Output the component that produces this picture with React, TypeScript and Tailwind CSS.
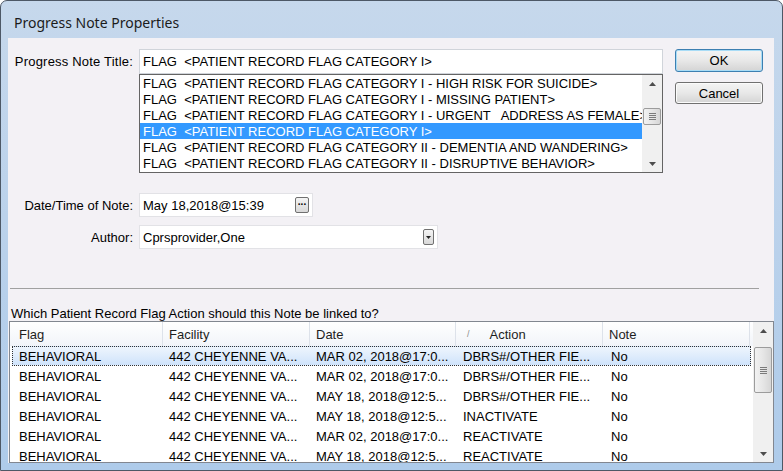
import React from "react";

const TITLE_LIST = [
  "FLAG  <PATIENT RECORD FLAG CATEGORY I - HIGH RISK FOR SUICIDE>",
  "FLAG  <PATIENT RECORD FLAG CATEGORY I - MISSING PATIENT>",
  "FLAG  <PATIENT RECORD FLAG CATEGORY I - URGENT   ADDRESS AS FEMALE>",
  "FLAG  <PATIENT RECORD FLAG CATEGORY I>",
  "FLAG  <PATIENT RECORD FLAG CATEGORY II - DEMENTIA AND WANDERING>",
  "FLAG  <PATIENT RECORD FLAG CATEGORY II - DISRUPTIVE BEHAVIOR>",
];

// header widths (from listview's inner left edge) and the matching row cell widths
const COLUMNS = [
  { title: "Flag", width: "w-[153px]", cell: "w-[150px] pl-[6px]" },
  { title: "Facility", width: "w-[147px]", cell: "w-[147px] pl-[6px]" },
  { title: "Date", width: "w-[146px]", cell: "w-[146px] pl-[6px]" },
  { title: "Action", width: "w-[147px]", cell: "w-[147px] pl-[7px]" },
  { title: "Note", width: "w-[147px]", cell: "w-[147px] pl-[8px]" },
];

const ACTIONS = [
  ["BEHAVIORAL", "442 CHEYENNE VA...", "MAR 02, 2018@17:0...", "DBRS#/OTHER FIE...", "No"],
  ["BEHAVIORAL", "442 CHEYENNE VA...", "MAR 02, 2018@17:0...", "DBRS#/OTHER FIE...", "No"],
  ["BEHAVIORAL", "442 CHEYENNE VA...", "MAY 18, 2018@12:5...", "DBRS#/OTHER FIE...", "No"],
  ["BEHAVIORAL", "442 CHEYENNE VA...", "MAY 18, 2018@12:5...", "INACTIVATE", "No"],
  ["BEHAVIORAL", "442 CHEYENNE VA...", "MAR 02, 2018@17:0...", "REACTIVATE", "No"],
  ["BEHAVIORAL", "442 CHEYENNE VA...", "MAY 18, 2018@12:5...", "REACTIVATE", "No"],
];

const Arrow = ({ up }: { up?: boolean }) => (
  <svg width="7" height="4" viewBox="0 0 7 4">
    <path d={up ? "M0 4 L3.5 0 L7 4 Z" : "M0 0 L3.5 4 L7 0 Z"} fill="#4d4d4d" />
  </svg>
);

const Grip = () => (
  <div className="flex flex-col gap-[1px]">
    <div className="h-[1px] w-[7px] bg-[#7a7a7a]" />
    <div className="h-[1px] w-[7px] bg-[#7a7a7a]" />
    <div className="h-[1px] w-[7px] bg-[#7a7a7a]" />
    <div className="h-[1px] w-[7px] bg-[#7a7a7a]" />
  </div>
);

type ScrollProps = {
  before: string;
  thumb: string;
  height: string;
};

const ScrollBar = ({ before, thumb, height }: ScrollProps) => (
  <div className={`flex w-[20px] flex-col bg-[#f0f0f0] ${height}`}>
    <div className="flex h-[17px] shrink-0 items-center justify-center">
      <Arrow up />
    </div>
    <div className={`shrink-0 ${before}`} />
    <div
      className={`mx-[1px] flex shrink-0 items-center justify-center rounded-[2px] border border-[#9c9c9c] bg-gradient-to-r from-[#f2f2f2] via-[#e6e6e6] to-[#d6d6d6] ${thumb}`}
    >
      <Grip />
    </div>
    <div className="flex-1" />
    <div className="flex h-[17px] shrink-0 items-center justify-center">
      <Arrow />
    </div>
  </div>
);

const Button = ({ label, primary }: { label: string; primary?: boolean }) => (
  <div
    className={`flex w-[88px] items-center justify-center rounded-[3px] border bg-gradient-to-b from-[#f4f4f4] via-[#e8e8e8] to-[#d4d4d4] text-[13px] text-black ${
      primary
        ? "h-[23px] border-[#3c7fb1] shadow-[inset_0_0_0_1px_#a8dcf6]"
        : "h-[22px] border-[#707070] shadow-[inset_0_0_0_1px_#fbfbfb]"
    }`}
  >
    {label}
  </div>
);

const App = () => {
  return (
    <div
      className="h-[471px] w-[783px] overflow-hidden rounded-t-[7px] border border-[#4d5866] bg-gradient-to-b from-[#c6d8ec] to-[#aecbea] text-black"
      style={{ fontFamily: '"Liberation Sans", Arial, sans-serif' }}
    >
      <div
        className="flex h-[37px] items-center pl-[13px] pt-[5px] text-[14px] text-[#1b1b1b]"
        style={{ fontFamily: '"Noto Sans", "Open Sans", sans-serif' }}
      >
        Progress Note Properties
      </div>

      <div className="ml-[7px] h-[425px] w-[766px] bg-[#f3f1f5] text-[13px] leading-none">
        {/* title + list + buttons */}
        <div className="flex pt-[11px]">
          <div className="w-[131px] pr-[6px] pt-[6px] text-right tracking-[0.2px]">Progress Note Title:</div>
          <div className="flex w-[524px] flex-col">
            <div className="flex h-[25px] items-center border border-[#d0d4da] bg-white pl-[3px] whitespace-pre">
              FLAG  &lt;PATIENT RECORD FLAG CATEGORY I&gt;
            </div>
            <div className="flex h-[99px] border border-[#646464] bg-white">
              <div className="flex-1 overflow-hidden">
                {TITLE_LIST.map((item, i) => (
                  <div
                    key={i}
                    className={`flex h-[16px] items-center pl-[3px] whitespace-pre ${
                      i === 3 ? "bg-[#3399ff] text-white" : ""
                    }`}
                  >
                    {item}
                  </div>
                ))}
              </div>
              <ScrollBar before="h-[16px]" thumb="h-[17px]" height="h-[97px]" />
            </div>
          </div>
          <div className="ml-[12px] flex flex-col gap-[10px]">
            <Button label="OK" primary />
            <Button label="Cancel" />
          </div>
        </div>

        {/* date */}
        <div className="mt-[20px] flex items-center">
          <div className="w-[131px] pr-[6px] text-right">Date/Time of Note:</div>
          <div className="flex h-[24px] w-[174px] items-center justify-between border border-[#e2e2e6] bg-white pl-[3px] pr-[3px]">
            <span>May 18,2018@15:39</span>
            <div className="flex h-[16px] w-[14px] items-start justify-center rounded-[2px] border border-[#707070] bg-gradient-to-b from-[#f4f4f4] to-[#d8d8d8] text-[10px] font-bold leading-[8px]">
              ...
            </div>
          </div>
        </div>

        {/* author */}
        <div className="mt-[8px] flex items-center">
          <div className="w-[131px] pr-[6px] text-right">Author:</div>
          <div className="flex h-[24px] w-[299px] items-center justify-between border border-[#e2e2e6] bg-white pl-[3px] pr-[3px]">
            <span>Cprsprovider,One</span>
            <div className="flex h-[16px] w-[11px] items-center justify-center rounded-[2px] border border-[#707070] bg-gradient-to-b from-[#f4f4f4] to-[#d8d8d8]">
              <svg width="5" height="3" viewBox="0 0 5 3">
                <path d="M0 0 L2.5 3 L5 0 Z" fill="#222" />
              </svg>
            </div>
          </div>
        </div>

        <div className="ml-[2px] mt-[39px] h-[1px] w-[749px] bg-[#a0a0a0]" />

        <div className="ml-[3px] mt-[18px]">Which Patient Record Flag Action should this Note be linked to?</div>

        {/* list view */}
        <div className="ml-[1px] mt-[1px] flex h-[142px] w-[765px] border border-[#828790] bg-white">
          <div className="flex-1 overflow-hidden">
            <div className="flex h-[24px] bg-gradient-to-b from-[#ffffff] to-[#f1f4f9]">
              {COLUMNS.map((col) => (
                <div
                  key={col.title}
                  className={`flex shrink-0 items-center border-r border-[#dde2ea] text-[#1e1e1e] ${col.width} ${
                    col.title === "Flag" ? "pl-[9px]" : col.title === "Action" ? "pl-[11px]" : "pl-[6px]"
                  }`}
                >
                  {col.title === "Action" && (
                    <span className="mr-[20px] text-[9px] text-[#8a8a8a]">/</span>
                  )}
                  {col.title}
                </div>
              ))}
            </div>
            {ACTIONS.map((row, i) => (
              <div
                key={i}
                className={`mx-[2px] flex h-[20px] items-center border ${
                  i === 0
                    ? "border-dotted border-[#333] bg-gradient-to-b from-[#eef5fd] to-[#cfe3fb]"
                    : "border-transparent"
                }`}
              >
                {row.map((cell, j) => (
                  <div key={j} className={`shrink-0 overflow-hidden whitespace-pre ${COLUMNS[j].cell}`}>
                    {cell}
                  </div>
                ))}
              </div>
            ))}
          </div>
          <ScrollBar before="h-[8px]" thumb="h-[46px]" height="h-[140px]" />
        </div>
      </div>
    </div>
  );
};

export default App;
